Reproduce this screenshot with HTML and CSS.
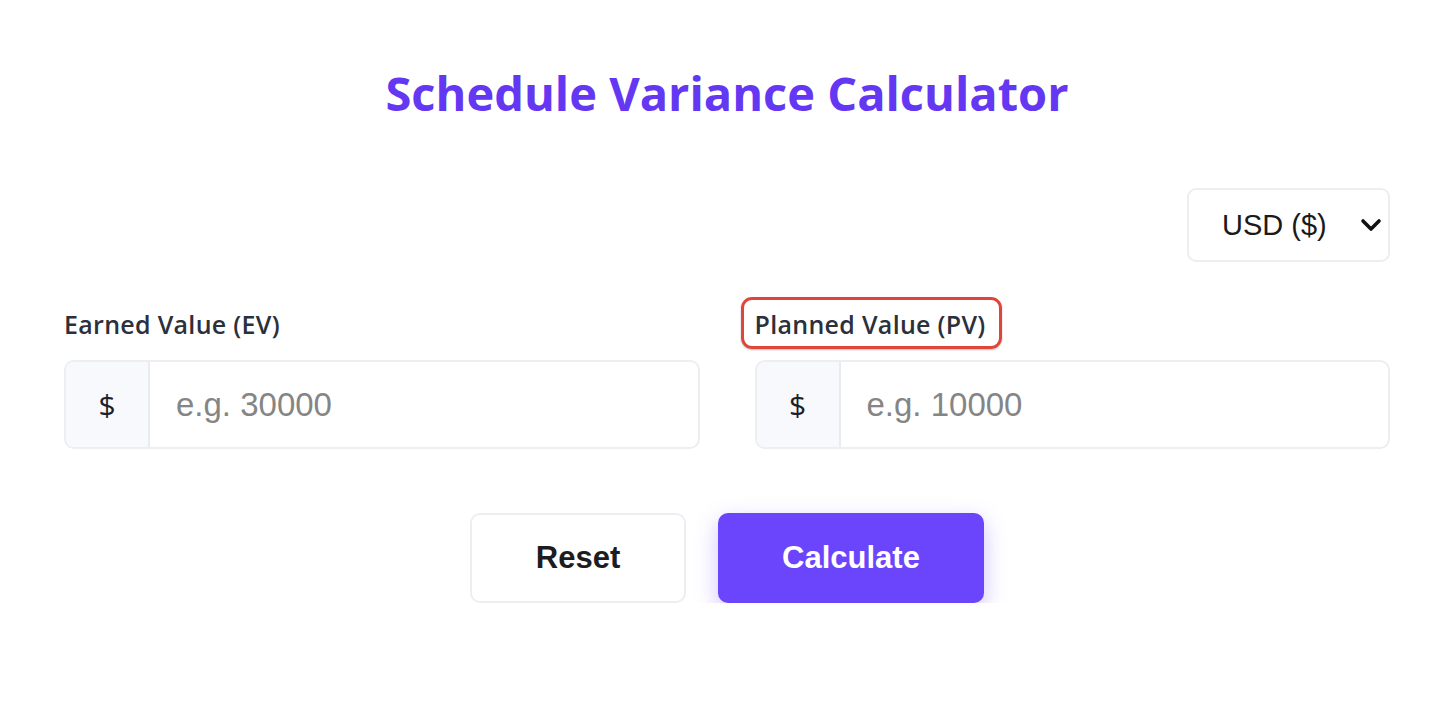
FILE: index.html
```html
<!DOCTYPE html>
<html lang="en">
<head>
<meta charset="utf-8">
<title>Schedule Variance Calculator</title>
<link rel="stylesheet" href="styles.css">
</head>
<body>
<main class="calc">
  <h1 class="calc-title">Schedule Variance Calculator</h1>
  <div class="currency-row">
    <div class="select-wrap">
      <select class="currency-select">
        <option>USD ($)</option>
      </select>
      <svg class="chevron" viewBox="0 0 22 14" width="22" height="14"><path d="M3 3 L11 11 L19 3" fill="none" stroke="#111" stroke-width="3.6" stroke-linecap="round" stroke-linejoin="round"/></svg>
    </div>
  </div>
  <div class="fields">
    <div class="field">
      <label class="field-label"><span class="label-text">Earned Value (EV)</span></label>
      <div class="input-group">
        <span class="addon">$</span>
        <input class="value-input" type="text" placeholder="e.g. 30000">
      </div>
    </div>
    <div class="field">
      <label class="field-label"><span class="label-text highlighted">Planned Value (PV)</span></label>
      <div class="input-group">
        <span class="addon">$</span>
        <input class="value-input" type="text" placeholder="e.g. 10000">
      </div>
    </div>
  </div>
  <div class="actions">
    <button class="btn btn-reset" type="button">Reset</button>
    <button class="btn btn-calc" type="button">Calculate</button>
  </div>
</main>
</body>
</html>
```

FILE: styles.css
```css
* { box-sizing: border-box; }
html, body { margin: 0; padding: 0; background: #fff; }
body { font-family: "Open Sans", "Noto Sans", sans-serif; color: #2d3748; }

.calc {
  padding: 61px 60px 0 64px;
}

.calc-title {
  margin: 0;
  text-align: center;
  font-family: "Open Sans", sans-serif;
  font-weight: 700;
  font-size: 47px;
  line-height: 64px;
  color: #6438f2;
  letter-spacing: 0;
}

.currency-row {
  display: flex;
  justify-content: flex-end;
  margin-top: 63px;
}

.select-wrap {
  position: relative;
  width: 203px;
  height: 74px;
}

.currency-select {
  appearance: none;
  -webkit-appearance: none;
  width: 100%;
  height: 100%;
  border: 2px solid #eceef2;
  border-radius: 9px;
  background: #fff;
  padding: 0 0 0 33px;
  font-family: "Liberation Sans", Arial, sans-serif;
  font-size: 29px;
  color: #1a1a1a;
}

.chevron {
  position: absolute;
  right: 8px;
  top: 30px;
  pointer-events: none;
}

.fields {
  display: grid;
  grid-template-columns: 1fr 1fr;
  column-gap: 55px;
  margin-top: 36px;
}

.field-label {
  display: block;
  height: 62px;
  padding-top: 11px;
}

.label-text {
  display: block;
  width: fit-content;
  font-family: "Open Sans", sans-serif;
  font-weight: 600;
  font-size: 25px;
  line-height: 30px;
  letter-spacing: 0.3px;
  color: #2b303b;
}

.label-text.highlighted {
  border: 3px solid #e0453a;
  border-radius: 11px;
  padding: 9px 13px 7px 11px;
  margin: -12px 0 0 -14px;
  box-shadow: 0 1px 2px rgba(0,0,0,0.25);
}

.input-group {
  display: flex;
  height: 89px;
  border: 2px solid #eceef2;
  border-radius: 10px;
  overflow: hidden;
  background: #fff;
}

.addon {
  flex: 0 0 84px;
  display: flex;
  align-items: center;
  justify-content: center;
  background: #f7f9fc;
  border-right: 2px solid #e8ebf0;
  font-family: "Open Sans", sans-serif;
  font-weight: 500;
  font-size: 30px;
  color: #1a202c;
}

.value-input {
  flex: 1;
  min-width: 0;
  border: 0;
  outline: none;
  padding: 0 0 0 26px;
  font-family: "Liberation Sans", Arial, sans-serif;
  font-size: 33px;
  color: #333;
  background: transparent;
}

.value-input::placeholder { color: #858585; }

.actions {
  display: flex;
  justify-content: center;
  gap: 32px;
  margin-top: 64px;
}

.btn {
  height: 90px;
  border-radius: 10px;
  font-family: "Liberation Sans", Arial, sans-serif;
  font-weight: 700;
  font-size: 31px;
  cursor: pointer;
}

.btn-reset {
  width: 216px;
  background: #fff;
  border: 2px solid #eceef2;
  color: #1d1d1f;
}

.btn-calc {
  width: 266px;
  background: #6a45fb;
  border: 0;
  color: #fff;
  box-shadow: 0 8px 22px rgba(120, 80, 255, 0.35);
}
```
